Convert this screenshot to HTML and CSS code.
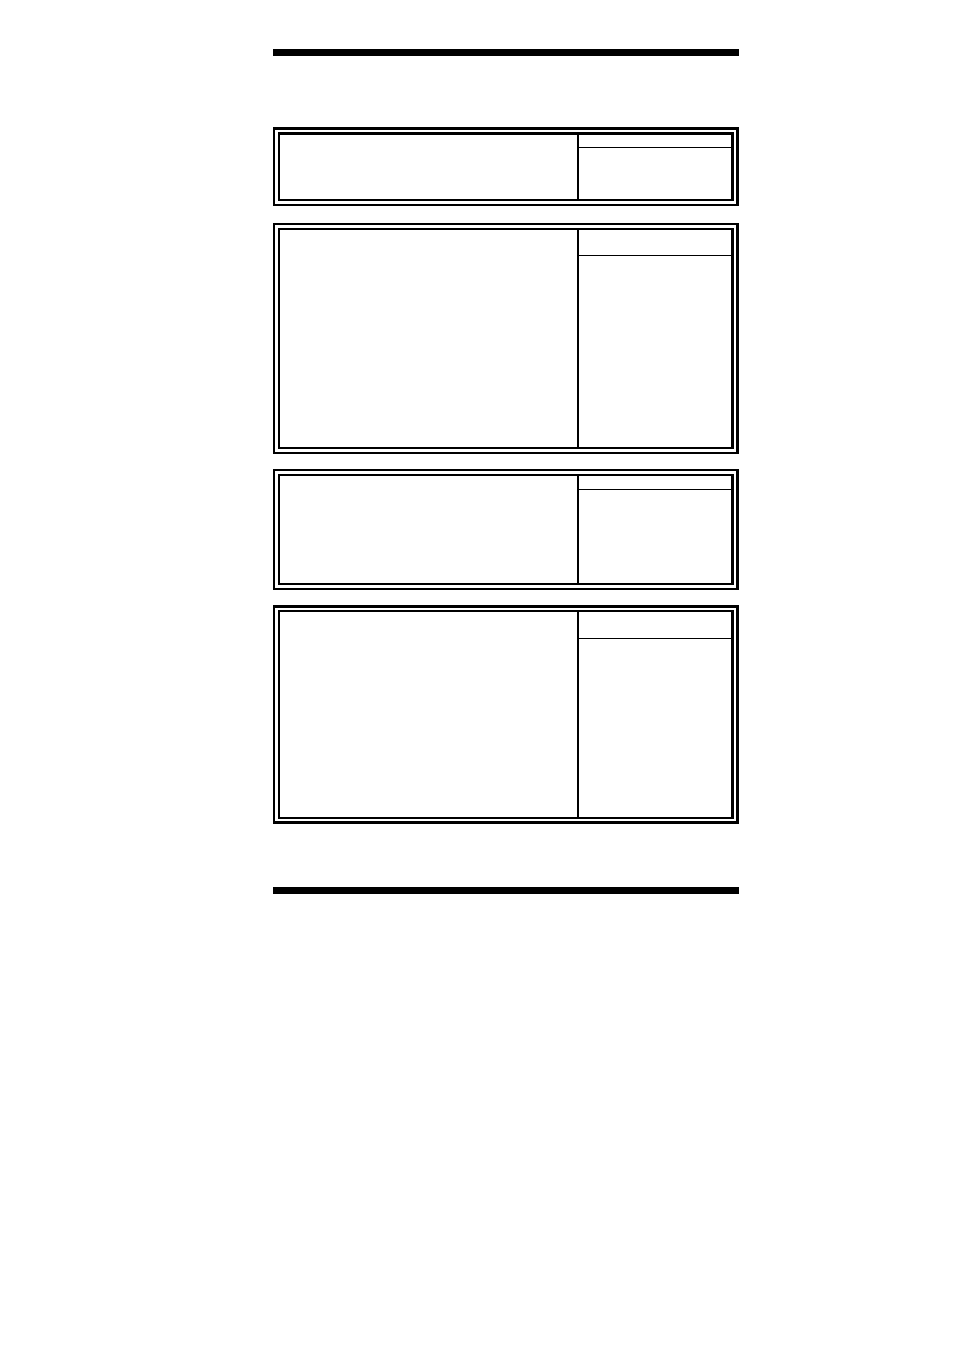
FILE: index.html
```html
<!DOCTYPE html>
<html lang="en">
<head>
    <meta charset="utf-8">
    <title>Settings</title>
    <link rel="stylesheet" href="styles.css">
</head>
<body>
    <header class="bar"></header>
    <main class="panels">
        <section class="panel panel-first">
            <div class="panel-inner">
                <div class="options"></div>
                <div class="side">
                    <div class="side-title"></div>
                    <div class="side-text"></div>
                </div>
            </div>
        </section>
        <section class="panel panel-second">
            <div class="panel-inner">
                <div class="options"></div>
                <div class="side">
                    <div class="side-title"></div>
                    <div class="side-text"></div>
                </div>
            </div>
        </section>
        <section class="panel panel-third">
            <div class="panel-inner">
                <div class="options"></div>
                <div class="side">
                    <div class="side-title"></div>
                    <div class="side-text"></div>
                </div>
            </div>
        </section>
        <section class="panel panel-fourth">
            <div class="panel-inner">
                <div class="options"></div>
                <div class="side">
                    <div class="side-title"></div>
                    <div class="side-text"></div>
                </div>
            </div>
        </section>
    </main>
    <footer class="bar"></footer>
</body>
</html>
```

FILE: styles.css
```css
body {
    margin: 0;
    padding: 49px 215px 49px 273px;
    background-color: #fff;
    font-family: "Liberation Sans", Arial, sans-serif;
}
.bar {
    border-top: 7px solid #000;
}
.panels {
    display: flex;
    flex-direction: column;
    gap: 15px;
    padding: 71px 0 63px;
}

/* double frame, heavier on the right */
.panel {
    border: 2px solid #000;
    border-right-width: 3px;
    padding: 3px 2px 3px 3px;
}
.panel-inner {
    display: grid;
    grid-template-columns: 1fr 154px;
    border: 2px solid #000;
    border-right-width: 3px;
}
.side {
    border-left: 2px solid #000;
}
.side-title {
    min-height: 13px;
    border-bottom: 1px solid #000;
}

.panel-first {
    border-top-width: 3px;
    padding-top: 2px;
    margin-bottom: 2px;
}
.panel-first .panel-inner {
    min-height: 64px;
    border-top-width: 3px;
}
.panel-first .side-title {
    min-height: 12px;
}
.panel-second .panel-inner {
    min-height: 217px;
}
.panel-second .side-title {
    min-height: 25px;
}
.panel-third .panel-inner {
    min-height: 107px;
}
.panel-fourth {
    border-top-width: 3px;
    border-bottom-width: 3px;
    padding-top: 2px;
    padding-bottom: 2px;
}
.panel-fourth .panel-inner {
    min-height: 205px;
}
.panel-fourth .side-title {
    min-height: 26px;
}
```
